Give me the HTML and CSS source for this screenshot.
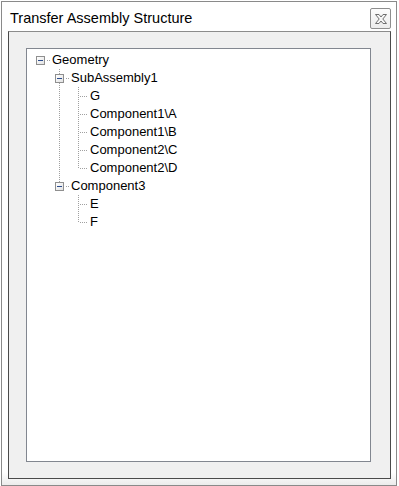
FILE: index.html
```html
<!DOCTYPE html>
<html lang="en">
<head>
    <meta charset="UTF-8">
    <link rel="stylesheet" href="styles.css">
    <title>Transfer Assembly Structure</title>
</head>
<body>
    <div class="window">
        <div class="title-bar">
            <span class="title">Transfer Assembly Structure</span>
            <button class="close-btn" aria-label="Close">
                <svg width="14" height="12" viewBox="0 0 14 12">
                    <polygon points="1.5,1.5 5,1.5 7,4 9,1.5 12.5,1.5 8.8,6 12.5,10.5 9,10.5 7,8 5,10.5 1.5,10.5 5.2,6" fill="#f7f7f7" stroke="#6f6f6f" stroke-width="1" stroke-linejoin="round"/>
                </svg>
            </button>
        </div>

        <div class="frame">
            <div class="tree">
                <!-- each row: indent cells, then the label -->
                <div class="row">
                    <div class="cell"><span class="box"><span class="minus"></span></span></div>
                    <span class="label">Geometry</span>
                </div>
                <div class="row">
                    <div class="cell"></div>
                    <div class="cell up down"><span class="box"><span class="minus"></span></span></div>
                    <span class="label">SubAssembly1</span>
                </div>
                <div class="row">
                    <div class="cell"></div>
                    <div class="cell pipe"></div>
                    <div class="cell tee"></div>
                    <span class="label">G</span>
                </div>
                <div class="row">
                    <div class="cell"></div>
                    <div class="cell pipe"></div>
                    <div class="cell tee"></div>
                    <span class="label">Component1\A</span>
                </div>
                <div class="row">
                    <div class="cell"></div>
                    <div class="cell pipe"></div>
                    <div class="cell tee"></div>
                    <span class="label">Component1\B</span>
                </div>
                <div class="row">
                    <div class="cell"></div>
                    <div class="cell pipe"></div>
                    <div class="cell tee"></div>
                    <span class="label">Component2\C</span>
                </div>
                <div class="row">
                    <div class="cell"></div>
                    <div class="cell pipe"></div>
                    <div class="cell elbow"></div>
                    <span class="label">Component2\D</span>
                </div>
                <div class="row">
                    <div class="cell"></div>
                    <div class="cell up"><span class="box"><span class="minus"></span></span></div>
                    <span class="label">Component3</span>
                </div>
                <div class="row">
                    <div class="cell"></div>
                    <div class="cell"></div>
                    <div class="cell tee"></div>
                    <span class="label">E</span>
                </div>
                <div class="row">
                    <div class="cell"></div>
                    <div class="cell"></div>
                    <div class="cell elbow"></div>
                    <span class="label">F</span>
                </div>
            </div>
        </div>
    </div>
</body>
</html>
```

FILE: styles.css
```css
* {
    margin: 0;
    padding: 0;
    box-sizing: border-box;
}
body {
    background-color: #ffffff;
    font-family: "Liberation Sans", Arial, sans-serif;
}
.window {
    margin: 1px 0 0 1px;
    width: 396px;
    height: 485px;
    border: 1px solid #8a8a8a;
    background: linear-gradient(to bottom, #ffffff 0, #ffffff 470px, #ececec 483px);
}
.title-bar {
    display: flex;
    justify-content: space-between;
    align-items: flex-start;
    height: 29px;
}
.title {
    padding: 6px 0 0 8px;
    font-size: 14.5px;
    line-height: 20px;
    color: #000;
}
.close-btn {
    margin: 6px 5px 0 0;
    width: 21px;
    height: 21px;
    display: flex;
    align-items: center;
    justify-content: center;
    border: 1px solid #8e8e8e;
    border-radius: 2px;
    background: linear-gradient(to bottom, #fdfdfd, #ececec);
}
.frame {
    margin-left: 6px;
    width: 383px;
    height: 448px;
    border: 1px solid #4a4a4a;
    border-top-color: #8c8c8c;
    background-color: #f0f0f0;
    padding: 16px 0 0 17px;
}
.tree {
    width: 345px;
    height: 414px;
    border: 1px solid #828790;
    background-color: #ffffff;
    padding: 2px 0 0 4px;
}
.row {
    display: flex;
    align-items: center;
    height: 18px;
}
.cell {
    width: 19px;
    height: 18px;
    flex-shrink: 0;
    display: flex;
    align-items: center;
    padding-left: 5px;
    background-repeat: no-repeat;
}
/* dotted connector lines */
.pipe {
    background-image: repeating-linear-gradient(to bottom, #a0a0a0 0 1px, transparent 1px 2px);
    background-position: 9px 0;
    background-size: 1px 18px;
}
.tee {
    background-image:
        repeating-linear-gradient(to bottom, #a0a0a0 0 1px, transparent 1px 2px),
        repeating-linear-gradient(to right, #a0a0a0 0 1px, transparent 1px 2px);
    background-position: 9px 0, 11px 9px;
    background-size: 1px 18px, 9px 1px;
}
.elbow {
    background-image:
        repeating-linear-gradient(to bottom, #a0a0a0 0 1px, transparent 1px 2px),
        repeating-linear-gradient(to right, #a0a0a0 0 1px, transparent 1px 2px);
    background-position: 9px 0, 11px 9px;
    background-size: 1px 10px, 9px 1px;
}
.box {
    width: 9px;
    height: 9px;
    border: 1px solid #8f8f8f;
    background: linear-gradient(135deg, #ffffff, #e2e2e2);
    display: flex;
    align-items: center;
    justify-content: center;
}
.minus {
    width: 5px;
    height: 1px;
    background-color: #2b4c8c;
}
/* expander cells: optional line above / below, always a stub to the label */
.cell:has(.box) {
    background-image: repeating-linear-gradient(to right, #a0a0a0 0 1px, transparent 1px 2px);
    background-position: 16px 9px;
    background-size: 4px 1px;
}
.cell.up:has(.box) {
    background-image:
        repeating-linear-gradient(to bottom, #a0a0a0 0 1px, transparent 1px 2px),
        repeating-linear-gradient(to right, #a0a0a0 0 1px, transparent 1px 2px);
    background-position: 9px 0, 16px 9px;
    background-size: 1px 5px, 4px 1px;
}
.cell.up.down:has(.box) {
    background-image:
        repeating-linear-gradient(to bottom, #a0a0a0 0 1px, transparent 1px 2px),
        repeating-linear-gradient(to bottom, #a0a0a0 0 1px, transparent 1px 2px),
        repeating-linear-gradient(to right, #a0a0a0 0 1px, transparent 1px 2px);
    background-position: 9px 0, 9px 14px, 16px 9px;
    background-size: 1px 5px, 1px 4px, 4px 1px;
}
.label {
    padding-left: 2px;
    font-size: 13px;
    line-height: 18px;
    color: #000;
    white-space: nowrap;
}
```
